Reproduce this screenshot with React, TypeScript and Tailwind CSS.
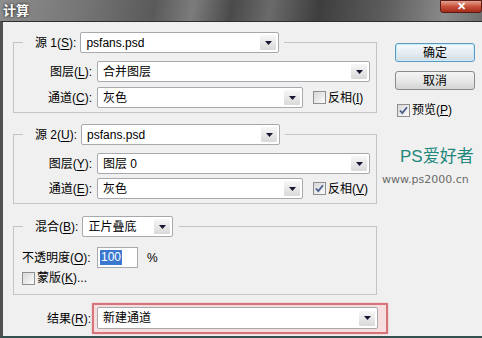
import React from 'react';

const Arrow: React.FC = () => (
  <svg width="7" height="4" viewBox="0 0 7 4">
    <path d="M0 0h7L3.5 4z" fill="#161633" />
  </svg>
);

const Select: React.FC<{ className?: string; children: React.ReactNode }> = ({ className = '', children }) => (
  <div className={`flex shrink-0 items-center h-[21px] bg-white border border-[#a7a9ae] rounded-[2px] pl-[5px] pr-[2px] ${className}`}>
    <span className="flex-1 whitespace-nowrap overflow-hidden">{children}</span>
    <span className="w-[16px] h-[15px] flex items-center justify-center rounded-[1px] bg-gradient-to-b from-[#f7f7f7] to-[#d9d9d9]">
      <Arrow />
    </span>
  </div>
);

const Check: React.FC<{ checked?: boolean }> = ({ checked }) => (
  <span className="w-[13px] h-[13px] shrink-0 border border-[#8e8f8f] bg-gradient-to-br from-[#d8d8d8] to-[#fbfbfb] flex items-center justify-center">
    {checked && (
      <svg width="9" height="9" viewBox="0 0 9 9">
        <path d="M1 4.5l2.3 2.6L8 1.2" stroke="#4b5f8f" strokeWidth="1.8" fill="none" />
      </svg>
    )}
  </span>
);

const Key: React.FC<{ k: string }> = ({ k }) => (
  <>
    (<u className="underline underline-offset-[2px]">{k}</u>):
  </>
);

const App: React.FC = () => {
  return (
    <div className="w-[482px] h-[338px] overflow-hidden flex flex-col bg-[#f0f0f0] text-[12px] leading-[14px] text-black font-['Liberation_Sans','Noto_Sans_CJK_SC',sans-serif]">
      {/* title bar */}
      <div className="h-[21px] shrink-0 flex items-start bg-[linear-gradient(100deg,#8e8e8e_0%,#747474_18%,#5a5a5a_32%,#7c7c7c_40%,#4a4a4a_48%,#6a6a6a_56%,#3e3e3e_66%,#5e5e5e_80%,#8a8a8a_92%,#6e6e6e_100%)]">
        <span className="pl-[3px] pt-[3px] text-[13px] leading-[15px] font-bold text-white [text-shadow:0_0_3px_#000]">计算</span>
        <div className="ml-auto w-[42px] h-[13px] flex items-center justify-center border border-[#5a1b14] rounded-b-[3px] bg-gradient-to-b from-[#e3a08f] via-[#c8503b] to-[#a52b19] text-white text-[11px] leading-none font-bold">
          ✕
        </div>
      </div>

      {/* body */}
      <div className="flex-1 flex border-l-[3px] border-l-[#505050] border-t border-t-[#2e2e2e] border-b-2 border-b-[#34514f]">
        {/* left column */}
        <div className="w-[364px] shrink-0 ml-[10px] flex flex-col">
          {/* group 1 */}
          <div className="mt-[20px] border border-[#c4c4c4] pb-[4px]">
            <div className="-mt-[11px] ml-[9px] w-fit flex items-center bg-[#f0f0f0] pl-[12px] pr-[5px]">
              <span>源 1<Key k="S" /></span>
              <Select className="ml-[4px] w-[199px]">psfans.psd</Select>
            </div>
            <div className="mt-[8px] flex items-center">
              <span className="w-[83px] pr-[5px] text-right">图层<Key k="L" /></span>
              <Select className="w-[273px]">合并图层</Select>
            </div>
            <div className="mt-[5px] flex items-center">
              <span className="w-[83px] pr-[5px] text-right">通道<Key k="C" /></span>
              <Select className="w-[206px]">灰色</Select>
              <span className="ml-[10px]"><Check /></span>
              <span className="ml-[2px]">反相(<u>I</u>)</span>
            </div>
          </div>

          {/* group 2 */}
          <div className="mt-[21px] border border-[#c4c4c4] pb-[4px]">
            <div className="-mt-[11px] ml-[9px] w-fit flex items-center bg-[#f0f0f0] pl-[12px] pr-[5px]">
              <span>源 2<Key k="U" /></span>
              <Select className="ml-[4px] w-[199px]">psfans.psd</Select>
            </div>
            <div className="mt-[8px] flex items-center">
              <span className="w-[83px] pr-[5px] text-right">图层<Key k="Y" /></span>
              <Select className="w-[273px]">图层 0</Select>
            </div>
            <div className="mt-[4px] flex items-center">
              <span className="w-[83px] pr-[5px] text-right">通道<Key k="E" /></span>
              <Select className="w-[206px]">灰色</Select>
              <span className="ml-[10px]"><Check checked /></span>
              <span className="ml-[2px]">反相(<u>V</u>)</span>
            </div>
          </div>

          {/* group 3 */}
          <div className="mt-[22px] border border-[#c4c4c4] pb-[9px]">
            <div className="-mt-[11px] ml-[9px] w-fit flex items-center bg-[#f0f0f0] pl-[12px] pr-[6px]">
              <span>混合<Key k="B" /></span>
              <Select className="ml-[4px] w-[91px]">正片叠底</Select>
            </div>
            <div className="mt-[10px] flex items-center">
              <span className="w-[83px] pl-[8px] whitespace-nowrap">不透明度<Key k="O" /></span>
              <div className="w-[41px] h-[21px] flex items-center bg-white border border-[#a7a9ae] pl-[2px]">
                <span className="bg-[#3a78d0] text-white px-[1px] leading-[15px]">100</span>
              </div>
              <span className="ml-[9px]">%</span>
            </div>
            <div className="mt-[3px] h-[14px] flex items-center pl-[8px]">
              <Check />
              <span className="ml-[2px]">蒙版(<u>K</u>)...</span>
            </div>
          </div>

          {/* result */}
          <div className="mt-[8px] flex items-center">
            <span className="w-[79px] shrink-0 pr-[1px] text-right">结果<Key k="R" /></span>
            <div className="w-[296px] shrink-0 border-2 border-[#d7737a] bg-[#f6dedf] pl-[3px] pr-[8px] pt-[2px] pb-[3px] shadow-[0_0_2px_#f0b8bb]">
              <Select className="w-[281px] h-[22px]">新建通道</Select>
            </div>
          </div>
        </div>

        {/* right column */}
        <div className="flex-1 flex flex-col">
          <button className="mt-[21px] ml-[18px] w-[80px] h-[19px] rounded-[3px] border border-[#5c9ac4] bg-gradient-to-b from-[#f4fafd] via-[#e6eef3] to-[#d3dde4] shadow-[inset_0_0_0_1px_#c8ecfb]">
            确定
          </button>
          <button className="mt-[9px] ml-[18px] w-[80px] h-[19px] rounded-[3px] border border-[#8a8a8a] bg-gradient-to-b from-[#f4f4f4] via-[#e8e8e8] to-[#d4d4d4]">
            取消
          </button>
          <div className="mt-[13px] ml-[20px] h-[14px] flex items-center">
            <Check checked />
            <span className="ml-[2px]">预览(<u>P</u>)</span>
          </div>
          <div className="mt-[30px] pl-[23px] text-[17px] leading-[20px] text-[#21887a] whitespace-nowrap">PS爱好者</div>
          <div className="mt-[7px] pl-[5px] text-[11px] leading-[12px] text-[#6a6a6a] font-['DejaVu_Sans',sans-serif] whitespace-nowrap">
            www.ps2000.cn
          </div>
        </div>
      </div>
    </div>
  );
};

export default App;
